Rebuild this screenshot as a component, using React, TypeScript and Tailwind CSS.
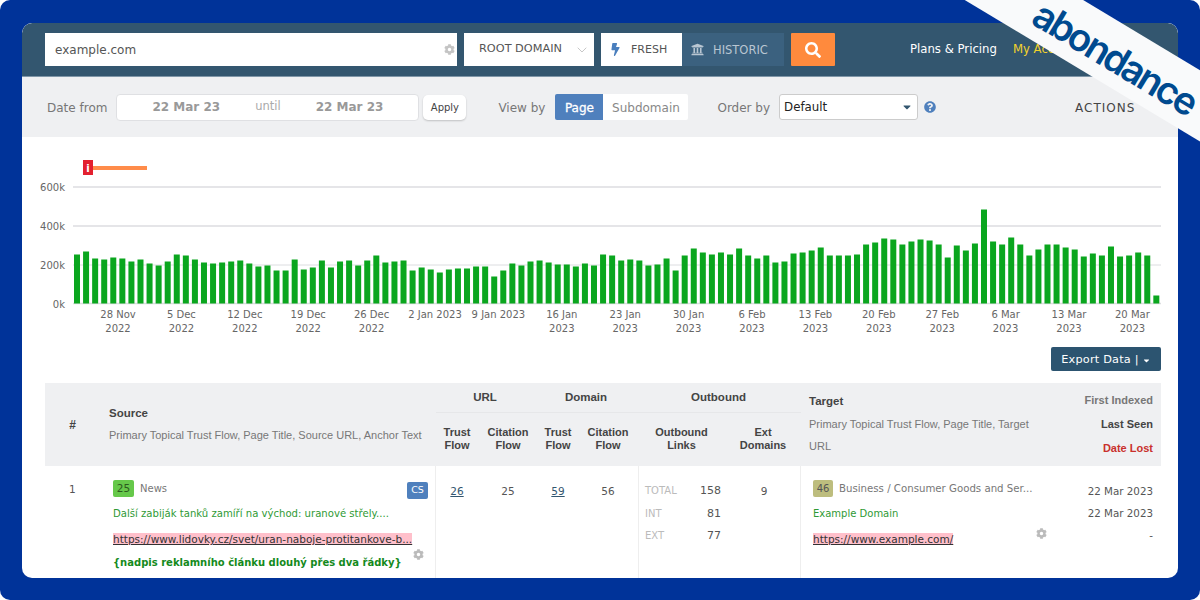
import React from 'react';
import { ChevronDown } from 'lucide-react';
import { FaBolt, FaCaretDown, FaCog, FaQuestionCircle, FaSearch, FaUniversity } from 'react-icons/fa';

const bars = [
  49, 52, 45, 44, 46, 45, 42, 44, 40, 38, 42, 49, 48, 44, 41, 40, 41, 42, 43, 40,
  37, 38, 33, 33, 44, 34, 36, 43, 36, 42, 43, 38, 43, 48, 41, 42, 43, 33, 36, 34,
  31, 34, 35, 35, 37, 37, 27, 33, 40, 38, 42, 43, 41, 39, 39, 37, 40, 38, 49, 48,
  43, 44, 43, 38, 39, 45, 33, 48, 55, 51, 49, 51, 49, 55, 48, 45, 48, 41, 42, 50,
  51, 53, 56, 48, 48, 48, 49, 59, 61, 65, 64, 59, 62, 64, 63, 59, 46, 58, 53, 60,
  94, 62, 59, 66, 59, 48, 54, 59, 59, 56, 54, 47, 50, 48, 57, 47, 48, 51, 48, 8,
];

const ticks = [
  ['28 Nov', '2022'], ['5 Dec', '2022'], ['12 Dec', '2022'], ['19 Dec', '2022'], ['26 Dec', '2022'],
  ['2 Jan 2023', ''], ['9 Jan 2023', ''], ['16 Jan', '2023'], ['23 Jan', '2023'], ['30 Jan', '2023'],
  ['6 Feb', '2023'], ['13 Feb', '2023'], ['20 Feb', '2023'], ['27 Feb', '2023'], ['6 Mar', '2023'],
  ['13 Mar', '2023'], ['20 Mar', '2023'],
];

function Chart() {
  return (
    <svg width="1156" height="210" viewBox="22 137 1156 210" className="block font-['DejaVu_Sans',sans-serif]">
      <rect x="83" y="160" width="10" height="15" fill="#e3202f" />
      <text x="88" y="172" textAnchor="middle" fontSize="10" fontWeight="700" fill="#fff">i</text>
      <rect x="93" y="166" width="54" height="4" fill="#ff8c4a" />
      {[['600k', 187], ['400k', 226], ['200k', 265], ['0k', 303.5]].map(([label, y]) => (
        <g key={label}>
          <line x1="73" x2="1161" y1={y} y2={y} stroke="#dcdde0" strokeWidth={y === 265 ? 1 : 1.5} />
          <text x="65" y={Number(y) + 4} textAnchor="end" fontSize="10" fill="#666">{label}</text>
        </g>
      ))}
      {bars.map((h, i) => (
        <rect key={i} x={74 + i * 9.07} y={303.5 - h} width="6" height={h} fill="#0aa61e" />
      ))}
      {ticks.map(([a, b], i) => (
        <g key={a} fontSize="10" fill="#666" textAnchor="middle">
          <text x={118 + i * 63.4} y="318">{a}</text>
          <text x={118 + i * 63.4} y="332">{b}</text>
        </g>
      ))}
    </svg>
  );
}

function TopBar() {
  return (
    <div className="h-[54px] bg-[#33566f] rounded-t-[10px] pl-[23px] flex items-center text-[12px] border-b border-[#7f96a8]">
      <div className="w-[412px] h-[33px] bg-white flex items-center justify-between pl-[10px] pr-[2px] text-[#555]">
        <span>example.com</span>
        <FaCog className="w-[11px] h-[11px] text-[#c4c4c4]" />
      </div>
      <div className="ml-[7px] w-[130px] h-[33px] bg-white flex items-center justify-between pl-[15px] pr-[4px] text-[#555] text-[11.3px]">
        <span>ROOT DOMAIN</span>
        <ChevronDown className="w-4 h-4 text-[#aaa]" strokeWidth={1} />
      </div>
      <div className="ml-[7px] w-[81px] h-[33px] bg-white flex items-center pl-[9px] gap-[10px] text-[#555] text-[11px]">
        <FaBolt className="w-[11px] h-[13px] text-[#4a7fbd]" />
        <span className="pt-[1px]">FRESH</span>
      </div>
      <div className="w-[102px] h-[33px] bg-[#3b617f] flex items-center pl-[9px] gap-[9px] text-[#b9c6d2] text-[11.5px]">
        <FaUniversity className="w-[13px] h-[13px]" />
        <span className="pt-[2px]">HISTORIC</span>
      </div>
      <div className="ml-[7px] w-[44px] h-[33px] bg-[#ff8a3d] flex items-center justify-center rounded-[1px]">
        <FaSearch className="w-[16px] h-[16px] text-white" />
      </div>
      <span className="ml-[75px] text-white text-[11.7px]">Plans &amp; Pricing</span>
      <span className="ml-[16px] text-[#f2d32c] text-[11.7px]">My Account</span>
    </div>
  );
}

function FilterBar() {
  return (
    <div className="h-[60px] bg-[#eff0f2] pl-[25px] flex items-center text-[12px] text-[#777]">
      <span className="pt-[1px]">Date from</span>
      <div className="ml-[9px] w-[303px] h-[27px] bg-white rounded-[4px] border border-[#dfe0e3] flex items-center font-bold text-[#999] text-[12px] pl-[35px]">
        <span>22 Mar 23</span>
        <span className="ml-[35px] font-normal text-[#aaa] text-[11.5px]">until</span>
        <span className="ml-[35px]">22 Mar 23</span>
      </div>
      <div className="ml-[4px] w-[43px] h-[25px] bg-white rounded-[5px] shadow-[0_1px_2px_rgba(0,0,0,0.2)] flex items-center justify-center text-[#444] text-[10px]">Apply</div>
      <span className="ml-[32px] pt-[1px]">View by</span>
      <div className="ml-[10px] h-[26px] flex items-center">
        <div className="w-[48px] h-full bg-[#4f80bd] text-white [-webkit-text-stroke:0.3px_white] flex items-center justify-center rounded-l-[2px] pt-[1px]">Page</div>
        <div className="w-[85px] h-full bg-white text-[#888] flex items-center justify-center rounded-r-[2px] pt-[1px]">Subdomain</div>
      </div>
      <span className="ml-[29px] pt-[1px]">Order by</span>
      <div className="ml-[9px] w-[139px] h-[26px] bg-white border border-[#ccc] rounded-[3px] flex items-center justify-between pl-[4px] pr-[4px] text-[#222] text-[11.8px]">
        <span className="pt-[1px]">Default</span>
        <FaCaretDown className="w-[12px] h-[12px] text-[#33566f]" />
      </div>
      <FaQuestionCircle className="ml-[6px] w-[12px] h-[12px] text-[#4f80bd]" />
      <span className="ml-[139px] text-[#444] tracking-[1px] pt-[1px]">ACTIONS</span>
    </div>
  );
}

function TableHead() {
  return (
    <div className="h-[83px] bg-[#eff0f2] grid grid-cols-[55px_336px_202px_163px_257px_103px] font-['Liberation_Sans',sans-serif] text-[12px] text-[#444]">
      <div className="flex items-center justify-center font-bold">#</div>
      <div className="pl-[9px] pt-[23px] leading-[14px]">
        <div className="font-bold text-[11.5px]">Source</div>
        <div className="mt-[8px] text-[#777] text-[11px]">Primary Topical Trust Flow, Page Title, Source URL, Anchor Text</div>
      </div>
      <div className="col-span-2 grid grid-cols-[42px_60px_40px_60px_87px_76px] grid-rows-[30px_1fr] font-bold text-[11px] text-center leading-[13px]">
        <div className="col-span-2 flex items-center justify-center border-b border-[#e6e7e9] pr-[4px] text-[11.5px]">URL</div>
        <div className="col-span-2 flex items-center justify-center border-b border-[#e6e7e9] pr-[4px] text-[11.5px]">Domain</div>
        <div className="col-span-2 flex items-center justify-center border-b border-[#e6e7e9] pr-[2px] text-[11.5px]">Outbound</div>
        <div className="pt-[13px]">Trust<br />Flow</div>
        <div className="pt-[13px]">Citation<br />Flow</div>
        <div className="pt-[13px]">Trust<br />Flow</div>
        <div className="pt-[13px]">Citation<br />Flow</div>
        <div className="pt-[13px]">Outbound<br />Links</div>
        <div className="pt-[13px]">Ext<br />Domains</div>
      </div>
      <div className="pl-[8px] pr-[24px] pt-[11px] leading-[14px]">
        <div className="font-bold text-[11.5px]">Target</div>
        <div className="mt-[5px] text-[#777] text-[11px] leading-[22px]">Primary Topical Trust Flow, Page Title, Target URL</div>
      </div>
      <div className="pr-[8px] pt-[5px] text-right font-bold text-[11px] leading-[24px]">
        <div className="text-[#777]">First Indexed</div>
        <div>Last Seen</div>
        <div className="text-[#c9302c]">Date Lost</div>
      </div>
    </div>
  );
}

function TableRow() {
  return (
    <div className="grid grid-cols-[55px_336px_42px_60px_40px_60px_163px_257px_103px] text-[10.5px] text-[#555]">
      <div className="pl-[24px] pt-[16px]">1</div>
      <div className="relative pl-[13px] pt-[14px] border-r border-[#eee] h-[112px]">
        <div className="flex items-center gap-[6px]">
          <span className="w-[21px] h-[17px] bg-[#66c84a] rounded-[2px] flex items-center justify-center text-[#2c5a1e]">25</span>
          <span className="text-[#777] text-[10px]">News</span>
        </div>
        <div className="mt-[9px] text-[#2f9a35] text-[10.1px]">Další zabiják tanků zamíří na východ: uranové střely....</div>
        <div className="mt-[11px]"><span className="bg-[#ffc0cb] underline text-[#333]">https://www.lidovky.cz/svet/uran-naboje-protitankove-b...</span></div>
        <div className="mt-[7px] font-bold text-[#148a1c] text-[10px]">{'{nadpis reklamního článku dlouhý přes dva řádky}'}</div>
        <span className="absolute right-[7px] top-[16px] w-[21px] h-[17px] bg-[#4f80bd] rounded-[2px] flex items-center justify-center text-white text-[9.5px]">CS</span>
        <FaCog className="absolute right-[11px] top-[83px] w-[11px] h-[11px] text-[#bbb]" />
      </div>
      <div className="pt-[18px] text-center underline text-[#33566f]">26</div>
      <div className="pt-[18px] text-center">25</div>
      <div className="pt-[18px] text-center underline text-[#33566f]">59</div>
      <div className="pt-[18px] text-center">56</div>
      <div className="grid grid-cols-[87px_76px] border-x border-[#eee]">
        <div className="pl-[6px] pt-[14px] leading-[22.5px]">
          <div className="flex justify-between"><span className="text-[#bbb] text-[10px]">TOTAL</span><span className="mr-[5px] text-[11px]">158</span></div>
          <div className="flex justify-between"><span className="text-[#bbb] text-[10px]">INT</span><span className="mr-[5px] text-[11px]">81</span></div>
          <div className="flex justify-between"><span className="text-[#bbb] text-[10px]">EXT</span><span className="mr-[5px] text-[11px]">77</span></div>
        </div>
        <div className="pt-[18px] text-center">9</div>
      </div>
      <div className="relative pl-[12px] pt-[14px]">
        <div className="flex items-center gap-[6px]">
          <span className="w-[20px] h-[17px] bg-[#bdbd7e] rounded-[2px] flex items-center justify-center text-[#555] text-[10px]">46</span>
          <span className="text-[#777] text-[10.2px]">Business / Consumer Goods and Ser...</span>
        </div>
        <div className="mt-[9px] text-[#2f9a35] text-[10px]">Example Domain</div>
        <div className="mt-[11px]"><span className="bg-[#ffc0cb] underline text-[#333]">https://www.example.com/</span></div>
        <FaCog className="absolute right-[11px] top-[62px] w-[11px] h-[11px] text-[#bbb]" />
      </div>
      <div className="pr-[8px] pt-[14px] text-right leading-[22px] text-[10.3px]">
        <div>22 Mar 2023</div>
        <div>22 Mar 2023</div>
        <div>-</div>
      </div>
    </div>
  );
}

export default function App() {
  return (
    <div className="w-[1200px] h-[600px] bg-white overflow-hidden">
      <div className="relative w-full h-full bg-[#003399] rounded-[10px] overflow-hidden pt-[23px] px-[22px] font-['DejaVu_Sans',sans-serif]">
        <div className="w-[1156px] h-[555px] bg-white rounded-[10px] overflow-hidden">
          <TopBar />
          <FilterBar />
          <Chart />
          <div className="flex justify-end pr-[17px]">
            <div className="w-[110px] h-[24px] bg-[#2c5470] rounded-[2px] flex items-center justify-center gap-[3px] text-white text-[11.3px] tracking-[0.2px] pt-[2px]">
              <span>Export Data |</span>
              <FaCaretDown className="w-[9px] h-[9px]" />
            </div>
          </div>
          <div className="mt-[12px] ml-[23px] w-[1116px]">
            <TableHead />
            <TableRow />
          </div>
        </div>
        {/* corner ribbon */}
        <div className="absolute left-[833px] top-[5px] w-[500px] h-[61px] bg-[#f9fafb] rotate-[31deg] flex items-center justify-center pl-[78px] pt-[4px]">
          <span className="font-['Inter',sans-serif] text-[#004a8f] text-[38px] leading-none tracking-[-2.5px] font-semibold">abondance</span>
        </div>
      </div>
    </div>
  );
}
